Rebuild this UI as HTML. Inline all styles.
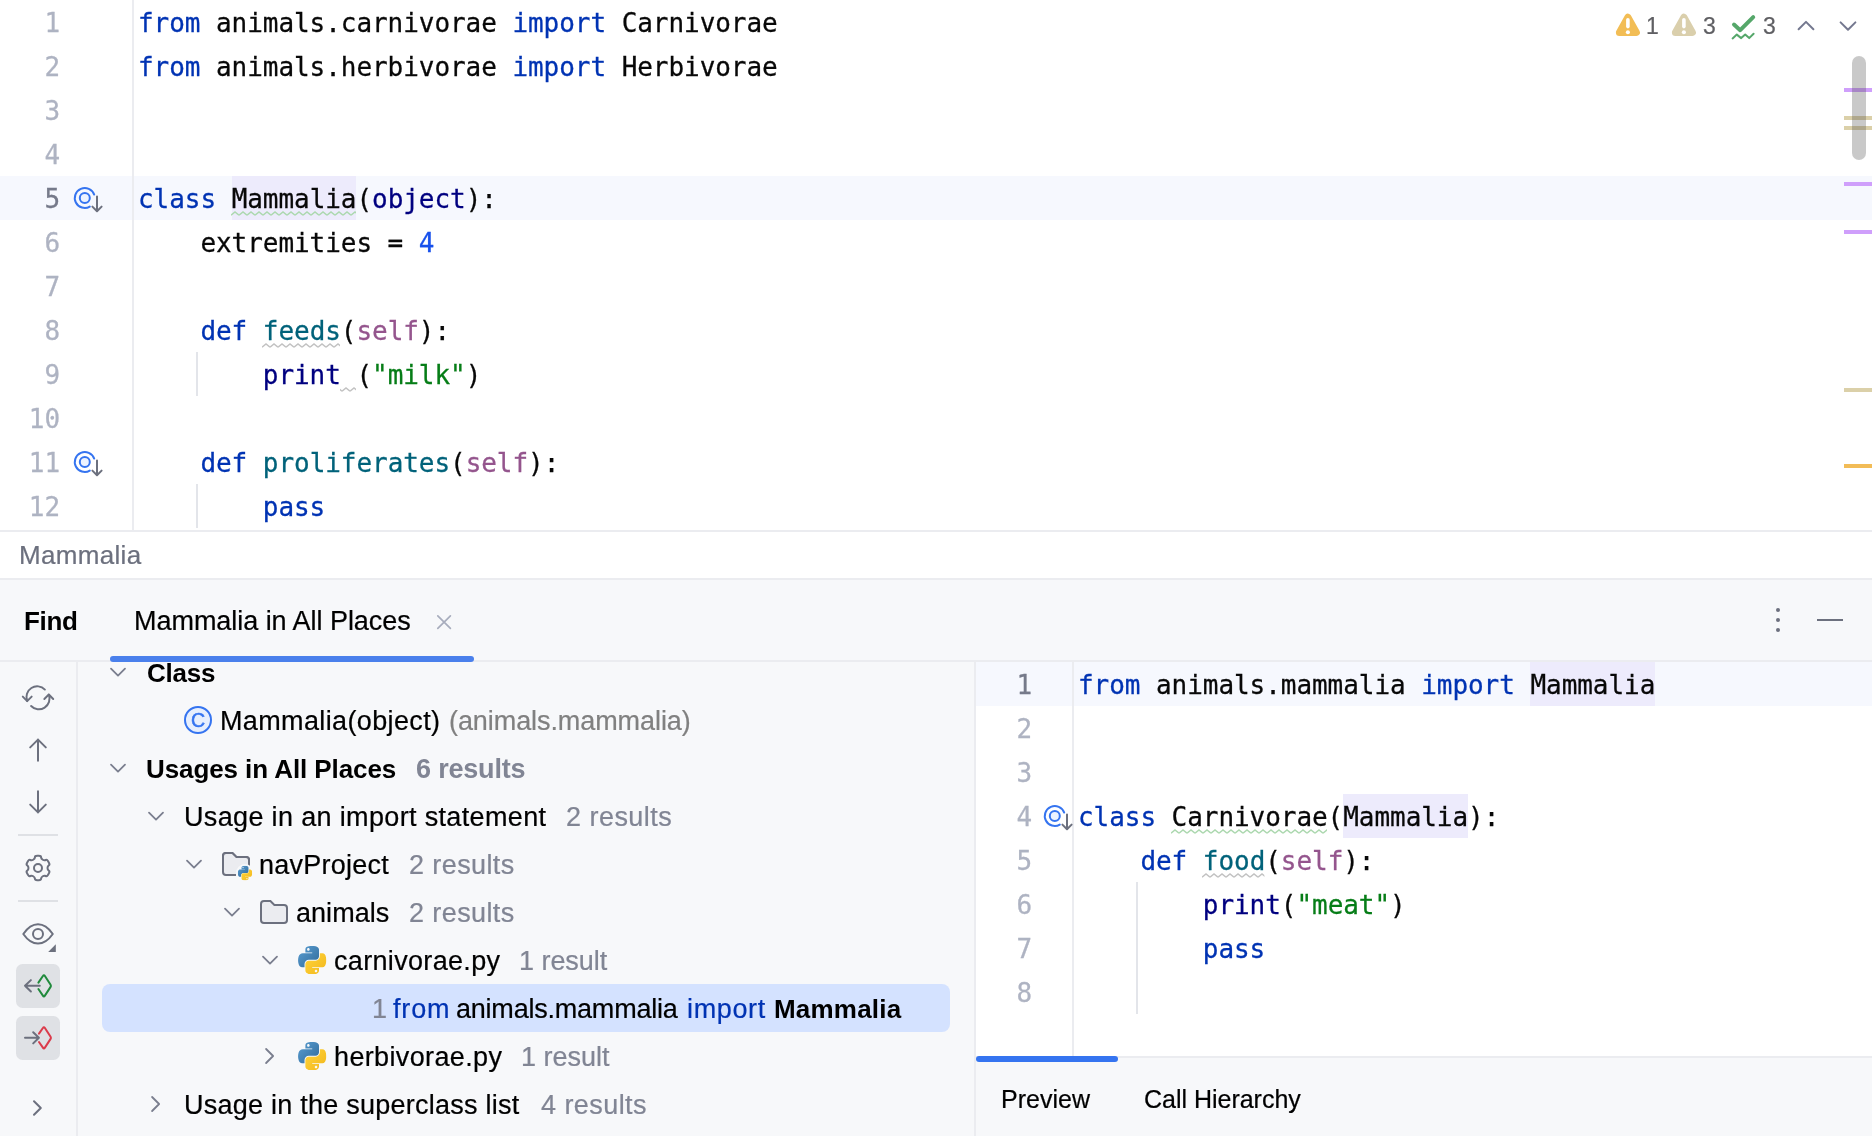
<!DOCTYPE html>
<html lang="en">
<head>
<meta charset="utf-8">
<title>Find Usages</title>
<style>
html,body{margin:0;padding:0;}
body{width:1872px;height:1136px;position:relative;overflow:hidden;background:#fff;
  font-family:"Liberation Sans",sans-serif;font-size:26px;color:#000;}
.abs{position:absolute;}
.code,.num,.t{will-change:transform;}
.code,.num{-webkit-text-stroke:0.28px currentColor;}
.t{-webkit-text-stroke:0.22px currentColor;}
.t.bold{-webkit-text-stroke:0;}
svg{position:absolute;overflow:visible;will-change:transform;}
/* ---------- code ---------- */
.code{position:absolute;left:0;top:0;font-family:"DejaVu Sans Mono","Liberation Mono",monospace;
  font-size:26px;letter-spacing:-0.053px;color:#080808;white-space:pre;}
.ln{position:absolute;height:44px;line-height:46px;white-space:pre;}
.num{position:absolute;height:44px;line-height:46px;text-align:right;color:#AEB3C2;width:60px;
  font-family:"DejaVu Sans Mono","Liberation Mono",monospace;font-size:26px;letter-spacing:-0.053px;}
.num.cur{color:#767A8A;}
.k{color:#0033B3;} .f{color:#00627A;} .s{color:#94558D;} .g{color:#067D17;} .n{color:#1750EB;} .b{color:#000080;}
.hl{background:#EDEBFC;}
.rowhl{position:absolute;background:#F6F8FE;height:44px;}
.vline{position:absolute;background:#EBECF0;width:2px;}
.hline{position:absolute;background:#EBECF0;height:2px;}
.guide{position:absolute;background:#E3E5EA;width:2px;}
.mark{position:absolute;left:1844px;width:28px;height:4px;}
/* ---------- UI text ---------- */
.t{position:absolute;white-space:pre;line-height:30px;height:30px;}
.gray{color:#818594;}
.bold{font-weight:700;}
</style>
</head>
<body>

<!-- ================= EDITOR ================= -->
<div id="editor" class="abs" style="left:0;top:0;width:1872px;height:530px;overflow:hidden;background:#fff;">
  <div class="rowhl" style="left:0;top:176px;width:1872px;"></div>
  <div class="vline" style="left:132px;top:0;height:530px;"></div>
  <div class="guide" style="left:196px;top:352px;height:44px;"></div>
  <div class="guide" style="left:196px;top:484px;height:44px;"></div>

  <div class="num" style="top:0px;">1</div>
  <div class="num" style="top:44px;">2</div>
  <div class="num" style="top:88px;">3</div>
  <div class="num" style="top:132px;">4</div>
  <div class="num cur" style="top:176px;">5</div>
  <div class="num" style="top:220px;">6</div>
  <div class="num" style="top:264px;">7</div>
  <div class="num" style="top:308px;">8</div>
  <div class="num" style="top:352px;">9</div>
  <div class="num" style="top:396px;">10</div>
  <div class="num" style="top:440px;">11</div>
  <div class="num" style="top:484px;">12</div>



  <!-- gutter icons -->
  <svg style="left:66px;top:176px;" width="44" height="44" viewBox="0 0 44 44">
    <circle cx="18.8" cy="22" r="5" fill="#EDF3FF" stroke="#3574F0" stroke-width="2"/>
    <path d="M23.8 30.66 A10 10 0 1 1 28.2 18.58" fill="none" stroke="#3574F0" stroke-width="2" stroke-linecap="round"/>
    <path d="M31 20.6 V35 M26.4 30.6 L31 35.2 L35.6 30.6" fill="none" stroke="#6C707E" stroke-width="2" stroke-linecap="round" stroke-linejoin="round"/>
  </svg>
  <svg style="left:66px;top:440px;" width="44" height="44" viewBox="0 0 44 44">
    <circle cx="18.8" cy="22" r="5" fill="#EDF3FF" stroke="#3574F0" stroke-width="2"/>
    <path d="M23.8 30.66 A10 10 0 1 1 28.2 18.58" fill="none" stroke="#3574F0" stroke-width="2" stroke-linecap="round"/>
    <path d="M31 20.6 V35 M26.4 30.6 L31 35.2 L35.6 30.6" fill="none" stroke="#6C707E" stroke-width="2" stroke-linecap="round" stroke-linejoin="round"/>
  </svg>

  <!-- error stripe marks -->
  <div class="mark" style="top:88px;background:#CF9FFB;"></div>
  <div class="mark" style="top:116px;background:#DBD0A9;"></div>
  <div class="mark" style="top:126px;background:#DBD0A9;"></div>
  <div class="mark" style="top:182px;background:#CF9FFB;"></div>
  <div class="mark" style="top:230px;background:#CF9FFB;"></div>
  <div class="mark" style="top:388px;background:#DBD0A9;"></div>
  <div class="mark" style="top:464px;background:#F2BC57;"></div>
  <!-- scrollbar thumb -->
  <div class="abs" style="left:1852px;top:56px;width:14px;height:104px;border-radius:7px;background:rgba(70,70,70,0.29);"></div>

  <!-- inspection widget -->
  <svg style="left:1612px;top:10px;" width="32" height="30" viewBox="0 0 32 30">
    <path d="M15.9 7.2 L24.4 22.5 H7.4 Z" fill="#F2BD55" stroke="#F2BD55" stroke-width="7" stroke-linejoin="round"/>
    <path d="M15.9 9.7 V16.6" stroke="#fff" stroke-width="3.6" stroke-linecap="round" fill="none"/>
    <circle cx="15.9" cy="22.3" r="2.05" fill="#fff"/>
  </svg>
  <div class="t" style="left:1645.5px;top:11px;font-size:23px;color:#5F5F63;">1</div>
  <svg style="left:1668px;top:10px;" width="32" height="30" viewBox="0 0 32 30">
    <path d="M15.9 7.2 L24.4 22.5 H7.4 Z" fill="#DACFAC" stroke="#DACFAC" stroke-width="7" stroke-linejoin="round"/>
    <path d="M15.9 9.7 V16.6" stroke="#fff" stroke-width="3.6" stroke-linecap="round" fill="none"/>
    <circle cx="15.9" cy="22.3" r="2.05" fill="#fff"/>
  </svg>
  <div class="t" style="left:1703px;top:11px;font-size:23px;color:#5F5F63;">3</div>
  <svg style="left:1728px;top:10px;" width="32" height="32" viewBox="0 0 32 32">
    <path d="M6 14.6 L12.2 20.2 L25.2 7.2" fill="none" stroke="#55A76A" stroke-width="4" stroke-linecap="round" stroke-linejoin="round"/>
    <path d="M4.6 28.4 L8.8 24.6 L13.2 28.1 L17.2 24.6 L21.2 28.1 L25.6 23.8" fill="none" stroke="#55A76A" stroke-width="2" stroke-linecap="round" stroke-linejoin="round"/>
  </svg>
  <div class="t" style="left:1763px;top:11px;font-size:23px;color:#5F5F63;">3</div>
  <svg style="left:1796px;top:16px;" width="20" height="20" viewBox="0 0 20 20">
    <path d="M2.6 13.2 L10 5.9 L17.4 13.2" fill="none" stroke="#74788F" stroke-width="2" stroke-linecap="round" stroke-linejoin="round"/>
  </svg>
  <svg style="left:1838px;top:16px;" width="20" height="20" viewBox="0 0 20 20">
    <path d="M2.6 6.4 L10 13.7 L17.4 6.4" fill="none" stroke="#74788F" stroke-width="2" stroke-linecap="round" stroke-linejoin="round"/>
  </svg>
  <div class="code" style="left:137.9px;">
    <div class="ln" style="top:0px;"><span class="k">from</span> animals.carnivorae <span class="k">import</span> Carnivorae</div>
    <div class="ln" style="top:44px;"><span class="k">from</span> animals.herbivorae <span class="k">import</span> Herbivorae</div>
    <div class="ln" style="top:176px;"><span class="k">class</span> <span class="hl" style="display:inline-block;height:44px;vertical-align:top;">Mammalia</span>(<span class="b">object</span>):</div>
    <div class="ln" style="top:220px;">    extremities = <span class="n">4</span></div>
    <div class="ln" style="top:308px;">    <span class="k">def</span> <span class="f">feeds</span>(<span class="s">self</span>):</div>
    <div class="ln" style="top:352px;">        <span class="b">print</span> (<span class="g">"milk"</span>)</div>
    <div class="ln" style="top:440px;">    <span class="k">def</span> <span class="f">proliferates</span>(<span class="s">self</span>):</div>
    <div class="ln" style="top:484px;">        <span class="k">pass</span></div>
  </div>
  <!-- squiggles -->
  <svg style="left:0;top:0;" width="1872" height="530">
    <defs>
      <pattern id="wg" width="8" height="6" patternUnits="userSpaceOnUse" x="231" y="0"><path d="M0 4.2 L4 1 L8 4.2" fill="none" stroke="#ACD8AF" stroke-width="1.5"/></pattern>
      <pattern id="wk" width="8" height="6" patternUnits="userSpaceOnUse" x="262" y="0"><path d="M0 4.2 L4 1 L8 4.2" fill="none" stroke="#C2C2C2" stroke-width="1.5"/></pattern>
    </defs>
    <g transform="translate(0,211)"><rect x="231" y="0" width="125" height="6" fill="url(#wg)"/></g>
    <g transform="translate(0,343)"><rect x="262" y="0" width="78" height="6" fill="url(#wk)"/></g>
    <g transform="translate(0,387)"><rect x="340" y="0" width="16" height="6" fill="url(#wk)"/></g>
  </svg>
</div>

<div class="hline" style="left:0;top:530px;width:1872px;"></div>
<!-- breadcrumbs -->
<div class="t" style="left:19.00px;top:540px;letter-spacing:0.322px;font-size:26px;color:#6C707E;">Mammalia</div>
<div class="hline" style="left:0;top:578px;width:1872px;"></div>

<!-- ================= TOOL WINDOW ================= -->
<div id="tw" class="abs" style="left:0;top:580px;width:1872px;height:556px;background:#F7F8FA;"></div>

<!-- header -->
<div class="t bold" style="left:24.00px;top:606px;letter-spacing:-0.329px;font-size:26px;color:#000;">Find</div>
<div class="t" style="left:133.50px;top:606px;letter-spacing:-0.040px;font-size:27px;color:#000;">Mammalia in All Places</div>
<div class="abs" style="left:110px;top:656px;width:364px;height:6px;border-radius:3px;background:#4A80EC;z-index:3;"></div>
<div class="hline" style="left:0;top:660px;width:1872px;"></div>
<svg style="left:0;top:580px;" width="1872" height="82">
  <path d="M437.8 35.8 L450.4 48.4 M450.4 35.8 L437.8 48.4" stroke="#A8ADBD" stroke-width="1.7" stroke-linecap="round" fill="none"/>
  <circle cx="1778" cy="30" r="2" fill="#6C707E"/><circle cx="1778" cy="40" r="2" fill="#6C707E"/><circle cx="1778" cy="50" r="2" fill="#6C707E"/>
  <rect x="1817" y="39" width="26" height="2" fill="#6C707E"/>
</svg>

<!-- left toolbar -->
<div class="vline" style="left:76px;top:662px;height:474px;"></div>
<div class="abs" style="left:18px;top:834px;width:40px;height:2px;background:#DFE1E5;"></div>
<div class="abs" style="left:18px;top:900px;width:40px;height:2px;background:#DFE1E5;"></div>
<div class="abs" style="left:16px;top:964px;width:44px;height:44px;border-radius:6.5px;background:#DFE1E5;"></div>
<div class="abs" style="left:16px;top:1016px;width:44px;height:44px;border-radius:6.5px;background:#DFE1E5;"></div>
<svg style="left:0;top:0;" width="78" height="1136" fill="none" stroke="#6C707E" stroke-width="2" stroke-linecap="round" stroke-linejoin="round">
  <!-- refresh -->
  <g transform="translate(38,697.8) scale(0.975)">
    <path d="M-11.1 3.2 A11 11 0 0 1 7.07 -8.43"/>
    <path d="M-15.6 -1.2 L-11.1 3.4 L-6.5 -1.2"/>
    <path d="M11.1 -3.2 A11 11 0 0 1 -7.07 8.43"/>
    <path d="M6.5 1.2 L11.1 -3.4 L15.6 1.2"/>
  </g>
  <!-- up / down -->
  <path d="M38 739.6 V760.8 M30.2 747.4 L38 739.6 L45.8 747.4"/>
  <path d="M38 791.2 V812.4 M30.2 804.6 L38 812.4 L45.8 804.6"/>
  <!-- gear -->
  <path d="M34.91 857.35 Q34.98 855.87 37.18 855.87 L38.82 855.87 Q41.02 855.87 41.09 857.35 L41.09 857.35 Q41.16 858.83 42.76 859.75 L42.76 859.75 Q44.36 860.68 45.68 860.00 L45.68 860.00 Q46.99 859.32 48.09 861.22 L48.92 862.65 Q50.02 864.55 48.77 865.35 L48.77 865.35 Q47.52 866.15 47.52 868.00 L47.52 868.00 Q47.52 869.85 48.77 870.65 L48.77 870.65 Q50.02 871.45 48.92 873.35 L48.09 874.78 Q46.99 876.68 45.68 876.00 L45.68 876.00 Q44.36 875.32 42.76 876.25 L42.76 876.25 Q41.16 877.17 41.09 878.65 L41.09 878.65 Q41.02 880.13 38.82 880.13 L37.18 880.13 Q34.98 880.13 34.91 878.65 L34.91 878.65 Q34.84 877.17 33.24 876.25 L33.24 876.25 Q31.64 875.32 30.32 876.00 L30.32 876.00 Q29.01 876.68 27.91 874.78 L27.08 873.35 Q25.98 871.45 27.23 870.65 L27.23 870.65 Q28.48 869.85 28.48 868.00 L28.48 868.00 Q28.48 866.15 27.23 865.35 L27.23 865.35 Q25.98 864.55 27.08 862.65 L27.91 861.22 Q29.01 859.32 30.32 860.00 L30.32 860.00 Q31.64 860.68 33.24 859.75 L33.24 859.75 Q34.84 858.83 34.91 857.35 Z"/>
  <circle cx="38" cy="868" r="4"/>
  <!-- eye -->
  <path d="M23.3 934 Q30 924.3 38 924.3 Q46 924.3 52.8 934 Q46 943.6 38 943.6 Q30 943.6 23.3 934 Z"/>
  <circle cx="38" cy="934" r="5"/>
  <path d="M55.8 944.2 V952 H48.2 Z" fill="#6C707E" stroke="none"/>
  <!-- jump to source toggles -->
  <path d="M25 985.8 H39.8 M30.9 980.1 L25 985.8 L30.9 991.5"/>
  <path d="M38.4 982.6 L42.9 976 Q43.9 974.4 44.9 976 L50.6 984.7 Q51.3 985.8 50.6 986.9 L44.9 995.6 Q43.9 997.2 42.9 995.6 L38.4 989" stroke="#208A3C"/>
  <path d="M25 1037.8 H38.6 M33.2 1032.2 L38.9 1037.8 L33.2 1043.4"/>
  <path d="M39 1033.6 L42.9 1028 Q43.9 1026.4 44.9 1028 L50.6 1036.7 Q51.3 1037.8 50.6 1038.9 L44.9 1047.6 Q43.9 1049.2 42.9 1047.6 L39 1042" stroke="#DB3B4B"/>
  <!-- expand -->
  <path d="M34 1101.2 L40.8 1108 L34 1114.8"/>
</svg>

<!-- tree -->
<div id="tree" class="abs" style="left:78px;top:662px;width:896px;height:474px;overflow:hidden;">
 <div class="abs" style="left:-78px;top:-662px;width:974px;height:1136px;">
  <div class="abs" style="left:102px;top:984px;width:848px;height:48px;border-radius:8px;background:#D4E2FF;"></div>
  <svg style="left:0;top:0;" width="974" height="1136">
    <defs>
      <linearGradient id="pyb" x1="0" y1="0" x2="1" y2="1"><stop offset="0" stop-color="#5A9FD4"/><stop offset="1" stop-color="#306998"/></linearGradient>
      <linearGradient id="pyy" x1="0" y1="0" x2="1" y2="1"><stop offset="0" stop-color="#FFD43B"/><stop offset="1" stop-color="#F2B71C"/></linearGradient>
    <symbol id="py" viewBox="0 0 111 110">
      <path fill="url(#pyb)" d="M54.92 0C50.34.02 45.96.41 42.11 1.09 30.76 3.1 28.7 7.29 28.7 15.03v10.22h26.81v3.41H18.64c-7.79 0-14.62 4.68-16.75 13.59-2.46 10.21-2.57 16.59 0 27.25 1.91 7.94 6.46 13.59 14.25 13.59h9.22V70.84c0-8.85 7.66-16.66 16.75-16.66h26.78c7.45 0 13.41-6.14 13.41-13.62V15.03c0-7.27-6.13-12.72-13.41-13.94C64.28.33 59.5-.02 54.92 0zM40.42 8.22c2.77 0 5.03 2.3 5.03 5.12 0 2.82-2.26 5.09-5.03 5.09-2.78 0-5.03-2.28-5.03-5.09 0-2.83 2.25-5.12 5.03-5.12z"/>
      <path fill="url(#pyy)" d="M85.64 28.66v11.91c0 9.23-7.83 17-16.75 17H42.11c-7.34 0-13.41 6.28-13.41 13.62v25.53c0 7.27 6.32 11.54 13.41 13.62 8.49 2.5 16.63 2.95 26.78 0 6.75-1.95 13.41-5.89 13.41-13.62V86.5H55.52v-3.41h40.19c7.79 0 10.7-5.44 13.41-13.59 2.8-8.4 2.68-16.48 0-27.25-1.93-7.76-5.6-13.59-13.41-13.59zM70.58 93.31c2.78 0 5.03 2.28 5.03 5.09 0 2.83-2.25 5.12-5.03 5.12-2.77 0-5.03-2.3-5.03-5.12 0-2.82 2.26-5.09 5.03-5.09z"/>
    </symbol>
    </defs>
    <g fill="none" stroke="#7A7E8E" stroke-width="1.8" stroke-linecap="round" stroke-linejoin="round">
    <path d="M111 668.6 L118 675.6 L125 668.6"/>
    <path d="M111 764.6 L118 771.6 L125 764.6"/>
    <path d="M149 812.6 L156 819.6 L163 812.6"/>
    <path d="M187 860.6 L194 867.6 L201 860.6"/>
    <path d="M225 908.6 L232 915.6 L239 908.6"/>
    <path d="M263 956.6 L270 963.6 L277 956.6"/>
    <path d="M266.1 1049 L273.1 1056 L266.1 1063"/>
    <path d="M152.1 1097 L159.1 1104 L152.1 1111"/>
    </g>
    <!-- class icon -->
    <circle cx="198" cy="720" r="13" fill="#E7EFFD" stroke="#3574F0" stroke-width="2"/>
    <text x="198.2" y="726.9" text-anchor="middle" font-family="Liberation Sans, sans-serif" font-size="19.6" fill="#3574F0" stroke="#3574F0" stroke-width="0.5">C</text>
    <!-- folders -->
    <path d="M223 856 Q223 853 226 853 H232.4 L236.4 857 H246 Q249 857 249 860 V866" fill="none" stroke="#6C707E" stroke-width="2"/>
    <path d="M223 856 Q223 853 226 853 H232.4 L236.4 857 H246 Q249 857 249 860 V875 H226 Q223 875 223 872 Z" fill="#EBECF0" stroke="none"/>
    <path d="M249 860 V865.4 M236 875 H226 Q223 875 223 872 V856 Q223 853 226 853 H232.4 L236.4 857 H246 Q249 857 249 860" fill="none" stroke="#6C707E" stroke-width="2"/>
    <circle cx="245" cy="873" r="9" fill="#F7F8FA"/>
    <use href="#py" x="237.8" y="865.8" width="14.4" height="14.4"/>
    <path d="M261 904 Q261 901 264 901 H270.4 L274.4 905 H284 Q287 905 287 908 V920 Q287 923 284 923 H264 Q261 923 261 920 Z" fill="#EBECF0" stroke="#6C707E" stroke-width="2"/>
    <use href="#py" x="298" y="946" width="28.4" height="28"/>
    <use href="#py" x="298" y="1042" width="28.4" height="28"/>
  </svg>
  <div class="t bold" style="left:146.50px;top:658px;letter-spacing:-0.205px;font-size:26px;">Class</div>
  <div class="t" style="left:219.75px;top:706px;letter-spacing:0.363px;font-size:27px;">Mammalia(object)</div>
  <div class="t" style="left:448.50px;top:706px;letter-spacing:-0.076px;font-size:27px;color:#808080;">(animals.mammalia)</div>
  <div class="t bold" style="left:146.20px;top:754px;letter-spacing:-0.086px;font-size:26px;">Usages in All Places</div>
  <div class="t bold gray" style="left:415.75px;top:754px;letter-spacing:-0.193px;font-size:27px;">6 results</div>
  <div class="t" style="left:183.50px;top:802px;letter-spacing:0.345px;font-size:27px;">Usage in an import statement</div>
  <div class="t gray" style="left:566.00px;top:802px;letter-spacing:0.464px;font-size:27px;">2 results</div>
  <div class="t" style="left:258.50px;top:850px;letter-spacing:0.243px;font-size:27px;">navProject</div>
  <div class="t gray" style="left:409.00px;top:850px;letter-spacing:0.401px;font-size:27px;">2 results</div>
  <div class="t" style="left:296.00px;top:898px;letter-spacing:0.036px;font-size:27px;">animals</div>
  <div class="t gray" style="left:409.00px;top:898px;letter-spacing:0.401px;font-size:27px;">2 results</div>
  <div class="t" style="left:334.00px;top:946px;letter-spacing:0.327px;font-size:27px;">carnivorae.py</div>
  <div class="t gray" style="left:519.25px;top:946px;letter-spacing:-0.041px;font-size:27px;">1 result</div>
  <div class="t gray" style="left:372.00px;top:994px;letter-spacing:0.000px;font-size:27px;">1</div>
  <div class="t" style="left:392.50px;top:994px;letter-spacing:0.830px;font-size:27px;color:#0033B3;">from</div>
  <div class="t" style="left:456.00px;top:994px;letter-spacing:-0.219px;font-size:27px;">animals.mammalia</div>
  <div class="t" style="left:687.00px;top:994px;letter-spacing:0.647px;font-size:27px;color:#0033B3;">import</div>
  <div class="t bold" style="left:774.00px;top:994px;letter-spacing:0.205px;font-size:26px;">Mammalia</div>
  <div class="t" style="left:334.00px;top:1042px;letter-spacing:0.367px;font-size:27px;">herbivorae.py</div>
  <div class="t gray" style="left:521.00px;top:1042px;letter-spacing:-0.006px;font-size:27px;">1 result</div>
  <div class="t" style="left:183.50px;top:1090px;letter-spacing:0.244px;font-size:27px;">Usage in the superclass list</div>
  <div class="t gray" style="left:540.50px;top:1090px;letter-spacing:0.432px;font-size:27px;">4 results</div>
 </div>
</div>
<div class="vline" style="left:974px;top:662px;height:474px;"></div>

<!-- preview -->
<div id="preview" class="abs" style="left:976px;top:662px;width:896px;height:394px;background:#fff;overflow:hidden;"></div>
<div class="rowhl" style="left:976px;top:662px;width:896px;"></div>
<div class="vline" style="left:1072px;top:662px;height:394px;"></div>
<div class="guide" style="left:1136px;top:882px;height:132px;"></div>
<div class="num cur" style="left:972.4px;top:662px;">1</div>
<div class="num" style="left:972.4px;top:706px;">2</div>
<div class="num" style="left:972.4px;top:750px;">3</div>
<div class="num" style="left:972.4px;top:794px;">4</div>
<div class="num" style="left:972.4px;top:838px;">5</div>
<div class="num" style="left:972.4px;top:882px;">6</div>
<div class="num" style="left:972.4px;top:926px;">7</div>
<div class="num" style="left:972.4px;top:970px;">8</div>
<svg style="left:1036px;top:794px;" width="44" height="44" viewBox="0 0 44 44">
  <circle cx="18.8" cy="22" r="5" fill="#EDF3FF" stroke="#3574F0" stroke-width="2"/>
  <path d="M23.8 30.66 A10 10 0 1 1 28.2 18.58" fill="none" stroke="#3574F0" stroke-width="2" stroke-linecap="round"/>
  <path d="M31 20.6 V35 M26.4 30.6 L31 35.2 L35.6 30.6" fill="none" stroke="#6C707E" stroke-width="2" stroke-linecap="round" stroke-linejoin="round"/>
</svg>
<div class="code" style="left:1077.9px;top:662px;">
  <div class="ln" style="top:0px;"><span class="k">from</span> animals.mammalia <span class="k">import</span> <span class="hl" style="display:inline-block;height:44px;vertical-align:top;">Mammalia</span></div>
  <div class="ln" style="top:132px;"><span class="k">class</span> Carnivorae(<span class="hl" style="display:inline-block;height:44px;vertical-align:top;">Mammalia</span>):</div>
  <div class="ln" style="top:176px;">    <span class="k">def</span> <span class="f">food</span>(<span class="s">self</span>):</div>
  <div class="ln" style="top:220px;">        <span class="b">print</span>(<span class="g">"meat"</span>)</div>
  <div class="ln" style="top:264px;">        <span class="k">pass</span></div>
</div>
<svg style="left:0;top:0;" width="1872" height="1136">
  <defs>
    <pattern id="wg2" width="8" height="6" patternUnits="userSpaceOnUse" x="1171" y="0"><path d="M0 4.2 L4 1 L8 4.2" fill="none" stroke="#ACD8AF" stroke-width="1.5"/></pattern>
    <pattern id="wk2" width="8" height="6" patternUnits="userSpaceOnUse" x="1202" y="0"><path d="M0 4.2 L4 1 L8 4.2" fill="none" stroke="#C2C2C2" stroke-width="1.5"/></pattern>
  </defs>
  <g transform="translate(0,829)"><rect x="1171" y="0" width="156" height="6" fill="url(#wg2)"/></g>
  <g transform="translate(0,873)"><rect x="1202" y="0" width="62.4" height="6" fill="url(#wk2)"/></g>
</svg>
<div class="hline" style="left:976px;top:1056px;width:896px;"></div>
<div class="abs" style="left:976px;top:1056px;width:142px;height:6px;border-radius:3px;background:#3574F0;"></div>
<div class="t" style="left:1001.00px;top:1084px;letter-spacing:0.023px;font-size:25px;">Preview</div>
<div class="t" style="left:1143.70px;top:1084px;letter-spacing:-0.014px;font-size:25px;">Call Hierarchy</div>

</body>
</html>
